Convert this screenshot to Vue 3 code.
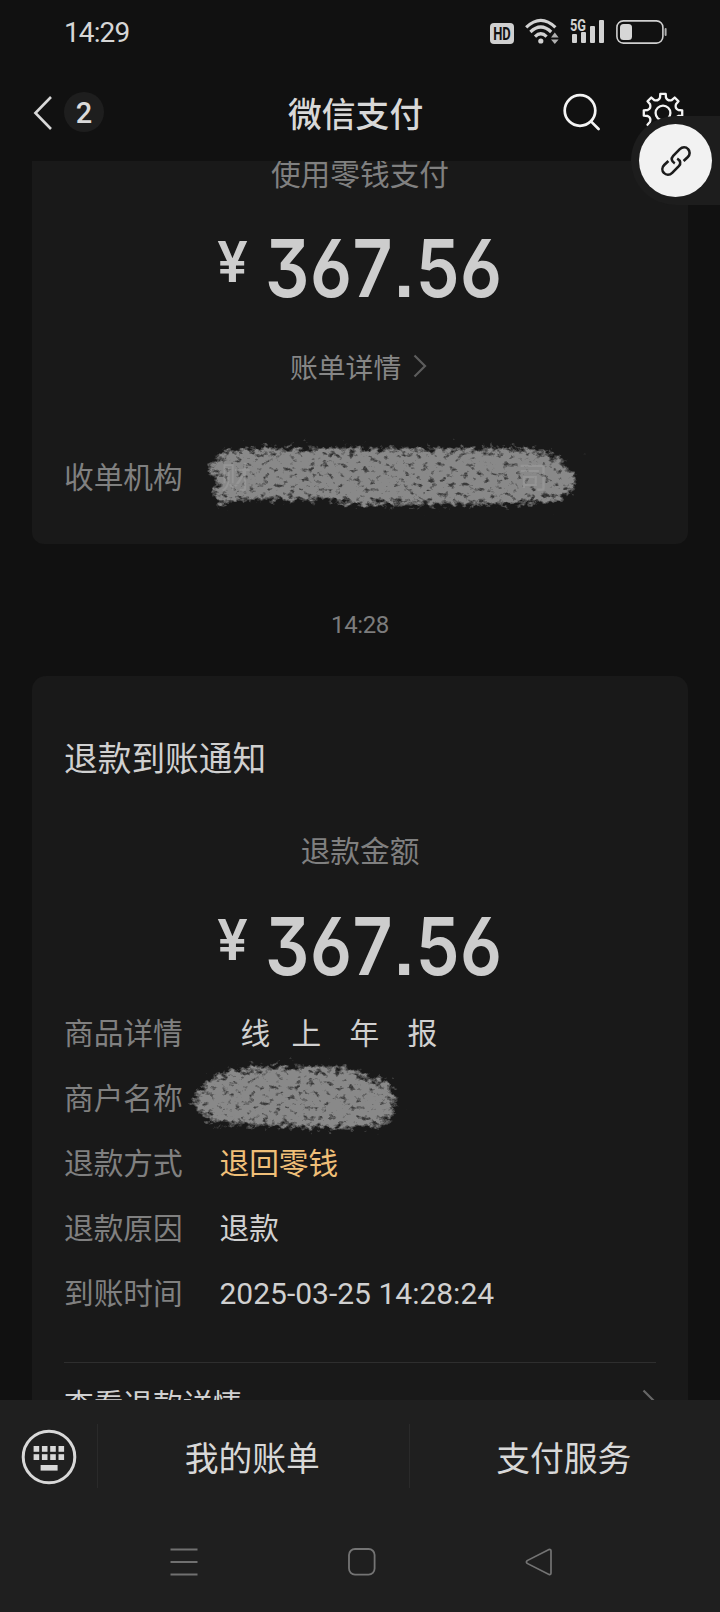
<script setup>
const nums = ['367.56', '367.56']
const rows = [
  { label: '商品详情', kind: 'chars' },
  { label: '商户名称', kind: 'smudge' },
  { label: '退款方式', value: '退回零钱', kind: 'gold' },
  { label: '退款原因', value: '退款', kind: 'text' },
  { label: '到账时间', value: '2025-03-25 14:28:24', kind: 'date' },
]
const chars = ['线', '上', '年', '报']
const teeth = Array.from({ length: 8 }, (_, i) => i)
function gearPath() {
  const p = (r, a) => {
    const t = ((a - 90) * Math.PI) / 180
    return `${(21 + r * Math.cos(t)).toFixed(2)} ${(21 + r * Math.sin(t)).toFixed(2)}`
  }
  let d = ''
  for (const i of teeth) {
    const a = i * 45
    d += `${i ? 'L' : 'M'}${p(19.4, a - 8)}L${p(19.4, a + 8)}L${p(15.6, a + 11)}Q${p(12.6, a + 22.5)} ${p(15.6, a + 34)}`
  }
  return d + 'Z'
}
const gear = gearPath()
</script>

<template>
  <div class="screen">
    <div class="status">
      <span class="clock">14:29</span>
      <div class="sys">
        <svg class="hd" width="24" height="21" viewBox="0 0 24 21">
          <rect width="24" height="21" rx="4" fill="#d0d0d0" />
          <text x="3.2" y="16.800" textLength="17.600" lengthAdjust="spacingAndGlyphs">HD</text>
        </svg>
        <svg class="wifi" width="34" height="27" viewBox="0 0 34 27">
          <g fill="none" stroke="#d2d2d2" stroke-width="3.2">
            <path d="M1.2 9.4Q15.8 -4.6 30.4 9.4" />
            <path d="M5.4 14Q15.8 4 26.2 14" />
            <path d="M10 18.6Q15.8 13 21.6 18.6" />
          </g>
          <circle cx="15.8" cy="23" r="2.6" fill="#d2d2d2" />
          <path d="M26 19.4L29.8 14.6L33.6 19.4ZM26 21.4L29.8 26L33.6 21.4Z" fill="#b0b0b0" />
        </svg>
        <svg class="signal" width="35" height="26" viewBox="0 0 35 26">
          <text x="0" y="12.5" class="fiveg" textLength="16" lengthAdjust="spacingAndGlyphs">5G</text>
          <g fill="#d2d2d2">
            <rect x="2" y="16" width="5" height="9" rx="1" />
            <rect x="11" y="14" width="5" height="11" rx="1" />
            <rect x="20" y="8" width="5" height="17" rx="1" />
            <rect x="29" y="2" width="5" height="23" rx="1" />
          </g>
        </svg>
        <svg class="battery" width="51" height="24" viewBox="0 0 51 24">
          <rect x="0.9" y="0.9" width="46" height="22.2" rx="6.5" fill="none" stroke="#d0d0d0" stroke-width="1.6" />
          <rect x="4" y="4" width="12" height="16" rx="3.5" fill="#d6d6d6" />
          <rect x="48.6" y="8" width="2" height="8" rx="1" fill="#b0b0b0" />
        </svg>
      </div>
    </div>

    <header class="header">
      <svg class="back" width="20" height="36" viewBox="0 0 20 36">
        <path d="M18 2L2.400 18L18 34" fill="none" stroke="#d8d8d8" stroke-width="2.6" />
      </svg>
      <span class="badge">2</span>
      <h1>微信支付</h1>
      <svg class="search" width="40" height="40" viewBox="0 0 40 40">
        <g fill="none" stroke="#f4f4f4" stroke-width="2.7" stroke-linecap="round">
          <circle cx="18" cy="18.5" r="15.3" />
          <path d="M29.2 29.6L36.6 37" />
        </g>
      </svg>
      <svg class="gear" width="42" height="42" viewBox="0 0 42 42">
        <g fill="none" stroke="#f4f4f4" stroke-width="2.3" stroke-linejoin="round">
          <path :d="gear" />
          <circle cx="21" cy="21" r="7.4" />
        </g>
      </svg>
    </header>

    <main class="feed">
      <section class="card first">
        <p class="caption">使用零钱支付</p>
        <div class="amount"><span class="yen">¥</span><span class="num">{{ nums[0] }}</span></div>
        <div class="bill">
          <span>账单详情</span>
          <svg width="14" height="24" viewBox="0 0 14 24">
            <path d="M1.5 1.5L12 12L1.5 22.5" fill="none" stroke="#5c5c5c" stroke-width="2.2" />
          </svg>
        </div>
        <div class="row org">
          <span class="label">收单机构</span>
          <svg class="smudge-a" width="390" height="78" viewBox="0 0 390 78">
            <defs>
              <filter id="rough" x="-5%" y="-20%" width="110%" height="140%" color-interpolation-filters="sRGB">
                <feGaussianBlur in="SourceAlpha" stdDeviation="5" result="soft" />
                <feTurbulence type="fractalNoise" baseFrequency="0.15 0.2" numOctaves="4" seed="7" result="n" />
                <feColorMatrix in="n" type="matrix" values="0 0 0 0 0  0 0 0 0 0  0 0 0 0 0  1.5 0 0 0 -0.3" result="grain" />
                <feComposite in="soft" in2="grain" operator="arithmetic" k1="0" k2="2.2" k3="2" k4="-1.9" result="mask" />
                <feFlood flood-color="#898989" />
                <feComposite in2="mask" operator="in" />
                <feGaussianBlur stdDeviation="0.5" />
              </filter>
            </defs>
            <path filter="url(#rough)" d="M6 32L26 13Q42 9 70 9L330 9Q356 11 368 24L382 38Q382 54 362 64L310 68L160 68L130 63L40 63L26 69L16 58L20 38Z" />
            <g class="ghost">
              <text x="25" y="50">财</text>
              <text x="322" y="50">司</text>
            </g>
          </svg>
        </div>
      </section>

      <time class="stamp">14:28</time>

      <section class="card second">
        <h2>退款到账通知</h2>
        <p class="caption">退款金额</p>
        <div class="amount"><span class="yen">¥</span><span class="num">{{ nums[1] }}</span></div>
        <div class="rows">
          <div v-for="r in rows" :key="r.label" class="row">
            <span class="label">{{ r.label }}</span>
            <span v-if="r.kind === 'chars'" class="value chars">
              <span v-for="c in chars" :key="c">{{ c }}</span>
            </span>
            <svg v-else-if="r.kind === 'smudge'" class="smudge-b" width="230" height="84" viewBox="0 0 230 84">
              <path filter="url(#rough)" d="M6 46L28 21Q48 10 90 9L160 10Q180 12 186 22L208 24L216 48L208 68Q190 74 150 74L90 71L32 69Z" />
            </svg>
            <span v-else class="value" :class="r.kind">{{ r.value }}</span>
          </div>
        </div>
        <div class="more">
          <span>查看退款详情</span>
          <svg width="14" height="24" viewBox="0 0 14 24">
            <path d="M1.5 1.5L12 12L1.5 22.5" fill="none" stroke="#666" stroke-width="2.2" />
          </svg>
        </div>
      </section>
    </main>

    <footer class="menu">
      <div class="kbd">
        <svg width="56" height="56" viewBox="0 0 56 56">
          <circle cx="28" cy="28" r="25.8" fill="none" stroke="#d8d8d8" stroke-width="3" />
          <g fill="#d8d8d8">
            <template v-for="y in 2" :key="y">
              <rect v-for="x in 4" :key="x" :x="12.6 + (x - 1) * 8.3" :y="17 + (y - 1) * 8.2" width="5.6" height="5.8" />
            </template>
            <rect x="19.6" y="36" width="17" height="5.6" />
          </g>
        </svg>
      </div>
      <div class="tab">我的账单</div>
      <div class="tab">支付服务</div>
    </footer>

    <nav class="nav">
      <svg width="28" height="28" viewBox="0 0 28 28">
        <path d="M0.5 1.5H27.5M0.5 14H27.5M0.5 26.5H27.5" stroke="#707070" stroke-width="2" />
      </svg>
      <svg width="28" height="28" viewBox="0 0 28 28">
        <rect x="1" y="1" width="25.6" height="25.6" rx="6" fill="none" stroke="#747474" stroke-width="1.8" />
      </svg>
      <svg width="28" height="28" viewBox="0 0 28 28">
        <path d="M24 1.6L2.2 12.6Q0.6 14 2.2 15.4L24 26.4Q26 27 26 25V3Q26 1 24 1.6Z" fill="none" stroke="#747474" stroke-width="1.7" />
      </svg>
    </nav>

    <div class="float">
      <div class="disc">
        <svg width="32" height="32" viewBox="0 0 32 32">
          <g fill="none" stroke="#1c1c1c" stroke-width="2.6">
            <path d="M14.800 18.400C11.400 16.400 10.800 13.400 13.200 10.800L19.800 4.200C22.400 1.600 26 1.800 28 4C30.200 6.200 30.200 9.600 27.800 12L23.600 16" />
            <path d="M17.200 13.600C20.600 15.600 21.200 18.600 18.800 21.200L12.200 27.800C9.600 30.400 6 30.200 4 28C1.800 25.800 1.800 22.400 4.200 20L8.400 16" />
          </g>
        </svg>
      </div>
    </div>
  </div>
</template>

<style>
html, body { margin: 0; background: #111; }
</style>

<style scoped>
.screen {
  position: relative;
  width: 720px;
  height: 1612px;
  overflow: hidden;
  display: flex;
  flex-direction: column;
  background: #111;
  color: #d0d0d0;
  font-family: Roboto, "Noto Sans CJK SC", sans-serif;
}
p, h1, h2 { margin: 0; font-weight: 400; }
svg { display: block; flex: none; }
.status {
  height: 66px;
  flex: none;
  display: flex;
  justify-content: space-between;
  box-sizing: border-box;
  padding: 0 53px 0 64px;
}
.clock { font-size: 28px; line-height: 66px; letter-spacing: -0.9px; color: #d6d6d6; }
.sys { display: flex; align-items: flex-start; }
.hd { margin-top: 23px; }
.hd text { font: 700 17.500px Roboto, sans-serif; fill: #111; }
.wifi { margin: 18px 0 0 11px; }
.signal { margin: 18px 0 0 11px; overflow: visible; }
.fiveg { font: 700 16px Roboto, sans-serif; fill: #d2d2d2; }
.battery { margin: 20px 0 0 11px; }
.header {
  height: 95px;
  flex: none;
  display: flex;
  align-items: flex-start;
}
.back { margin: 29px 0 0 33px; }
.badge {
  width: 40px;
  height: 40px;
  margin: 26px 0 0 11px;
  border-radius: 50%;
  background: #1e1e1e;
  font: 500 29px/42px Roboto, sans-serif;
  text-align: center;
  color: #dadada;
}
h1 {
  width: 136px;
  margin: 25px 0 0 184px;
  font-size: 33.800px;
  line-height: 50px;
  font-weight: 500;
  white-space: nowrap;
  color: #d8d8d8;
}
.search { margin: 26px 0 0 138px; }
.gear { margin: 26px 0 0 40px; }
.feed {
  height: 1239px;
  flex: none;
  overflow: hidden;
  display: flex;
  flex-direction: column;
  align-items: center;
}
.card {
  width: 656px;
  flex: none;
  box-sizing: border-box;
  padding: 0 32px;
  background: #191919;
}
.first { height: 383px; border-radius: 0 0 12px 12px; }
.second { height: 820px; border-radius: 14px; }
.caption {
  font-size: 29.700px;
  line-height: 44px;
  text-align: center;
  color: #808080;
}
.first .caption { margin-top: -8px; }
.amount {
  height: 80px;
  display: flex;
  align-items: flex-start;
  padding-left: 153px;
  font-family: Inter, sans-serif;
  font-weight: 600;
  color: #cdcdcd;
}
.first .amount { margin-top: 31px; }
.yen { width: 48px; flex: none; font-size: 56px; line-height: 68px; transform: scaleX(0.98); transform-origin: 0 0; }
.num {
  font-size: 80px;
  line-height: 80px;
  font-kerning: none;
  letter-spacing: 0.6px;
  font-feature-settings: "cv09", "cv03", "ss07";
  transform: scaleX(0.87);
  transform-origin: 0 0;
}
.bill {
  display: flex;
  align-items: center;
  gap: 12px;
  height: 40px;
  margin-top: 38px;
  padding-left: 226px;
  font-size: 27.800px;
  color: #868686;
}
.row { display: flex; align-items: center; height: 65px; font-size: 29.700px; }
.org { margin-top: 57px; }
.label { width: 155.500px; flex: none; color: #808080; }
.value { color: #d0d0d0; white-space: nowrap; font-size: 29.700px; }
.date { font-size: 30px; padding-top: 3px; }
.gold { color: #efbf78; }
.chars { display: flex; padding-left: 21px; }
.chars span { width: 58px; }
.chars span:first-child { width: 51px; }
.smudge-a { margin: 3px 0 0 -24px; }
.smudge-b { margin: 3px 0 0 -38px; }
.ghost text { font-size: 30px; fill: #a4a4a4; opacity: 0.45; }
.stamp {
  height: 132px;
  flex: none;
  font-size: 24px;
  letter-spacing: -0.4px;
  line-height: 162px;
  color: #7c7c7c;
}
h2 { font-size: 33.700px; line-height: 48px; padding-top: 60px; color: #d0d0d0; }
.second .caption { margin-top: 46px; }
.second .amount { margin-top: 32px; }
.rows { margin-top: 13px; }
.more {
  display: flex;
  justify-content: space-between;
  align-items: flex-start;
  margin-top: 38px;
  padding-top: 20px;
  border-top: 1px solid #2e2e2e;
  font-size: 29.700px;
  line-height: 44px;
}
.more svg { margin-top: 6px; }
.menu { height: 114px; flex: none; display: flex; align-items: center; background: #1f1f1f; }
.kbd { width: 97px; flex: none; box-sizing: border-box; padding-left: 21px; }
.tab {
  flex: 1;
  height: 64px;
  margin-top: -2px;
  border-left: 1px solid #2a2a2a;
  box-sizing: border-box;
  padding-right: 2px;
  font-size: 33.800px;
  line-height: 72px;
  text-align: center;
  color: #d8d8d8;
}
.nav {
  flex: 1;
  display: flex;
  align-items: flex-start;
  padding: 34px 0 0 170px;
  gap: 149.500px;
  background: #1f1f1f;
}
.float {
  position: absolute;
  right: 0;
  top: 116px;
  width: 89px;
  height: 89px;
  box-sizing: border-box;
  padding: 8px 0 0 8px;
  border-radius: 45px 0 0 45px;
  background: #1d1d1d;
}
.disc {
  width: 73px;
  height: 73px;
  border-radius: 50%;
  display: flex;
  align-items: center;
  justify-content: center;
  background: #f2f2f2;
}
</style>
